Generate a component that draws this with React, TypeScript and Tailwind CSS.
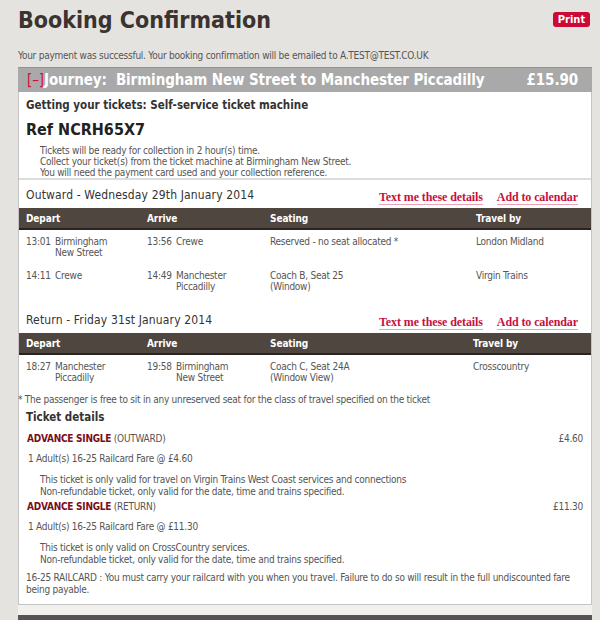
import React from "react";

const Lines = ({ items }: { items: string[] }) => (
  <div>
    {items.map((x) => (
      <div key={x}>{x}</div>
    ))}
  </div>
);

const Row = ({
  d,
  a,
  s,
  t,
  cols,
}: {
  d: [string, string[]];
  a: [string, string[]];
  s: string[];
  t: string;
  cols: string;
}) => (
  <div className={`grid ${cols} pl-[7px] pt-[6px] pb-[6px] text-[10px] tracking-[-0.25px] leading-[11px] text-[#555]`}>
    <div className="flex">
      <span className="w-[29px] shrink-0">{d[0]}</span>
      <Lines items={d[1]} />
    </div>
    <div className="flex">
      <span className="w-[29px] shrink-0">{a[0]}</span>
      <Lines items={a[1]} />
    </div>
    <Lines items={s} />
    <div>{t}</div>
  </div>
);

const TableHead = ({ cols }: { cols: string }) => (
  <div className={`grid ${cols} pl-[7px] h-[22px] items-center bg-[#4f4640] border-b-2 border-[#2a2421] text-white font-bold text-[10px] tracking-[-0.1px]`}>
    <div>Depart</div>
    <div>Arrive</div>
    <div>Seating</div>
    <div>Travel by</div>
  </div>
);

const SectionTitle = ({ title }: { title: string }) => (
  <div className="flex items-start justify-between pl-[7px] pr-[13px] h-[28px] pt-[7px]">
    <span className="text-[12px] tracking-[0.15px] text-[#333] leading-[16px]">{title}</span>
    <div className="flex gap-[14px] mt-[4px] text-[12px] tracking-[-0.1px] font-bold text-[#c9103d] font-['Liberation_Serif',serif] leading-[13px]">
      <span className="border-b border-[#eaa4b6]">Text me these details</span>
      <span className="border-b border-[#eaa4b6]">Add to calendar</span>
    </div>
  </div>
);

const OUT_COLS = "grid-cols-[121px_123px_206px_1fr]";
const RET_COLS = "grid-cols-[121px_123px_203px_1fr]";

export default function App() {
  return (
    <div className="w-[600px] h-[620px] overflow-hidden bg-[#e5e3df] font-['DejaVu_Sans_Condensed','Liberation_Sans',sans-serif] text-[#444]">
      <div className="flex justify-between items-start pl-[18px] pr-[10px] pt-[4px]">
        <h1 className="text-[23px] leading-[32px] font-bold text-[#3a3330]">Booking Confirmation</h1>
        <span className="mt-[8px] w-[37px] text-center h-[15px] leading-[15px] rounded-[3px] bg-[#cc0a35] text-white text-[11px] font-bold">
          Print
        </span>
      </div>
      <div className="pl-[18px] mt-[13px] text-[10px] tracking-[-0.25px] leading-[14px] text-[#555]">
        Your payment was successful. Your booking confirmation will be emailed to A.TEST@TEST.CO.UK
      </div>
      <div className="ml-[18px] mr-[8px] mt-[4px]">
        <div className="h-[25px] bg-[#a9a9a9] flex items-center justify-between pl-[9px] pr-[14px] text-white font-bold text-[15px] tracking-[-0.1px] border-t border-[#939393] whitespace-nowrap">
          <span>
            <span className="text-[#d0103a] font-normal">[–]</span>Journey:&nbsp; Birmingham New Street to Manchester Piccadilly
          </span>
          <span>£15.90</span>
        </div>
        <div className="bg-white border border-[#c4c4c4] border-t-0 pb-[8px]">
          <div className="pl-[7px] pt-[5px] text-[11.5px] font-bold text-[#333] leading-[16px]">
            Getting your tickets: Self-service ticket machine
          </div>
          <div className="pl-[7px] mt-[7px] text-[16px] font-bold text-[#222] leading-[20px]">Ref NCRH65X7</div>
          <div className="pl-[21px] mt-[5px] text-[10px] tracking-[-0.25px] leading-[11px] text-[#555]">
            <div>Tickets will be ready for collection in 2 hour(s) time.</div>
            <div>Collect your ticket(s) from the ticket machine at Birmingham New Street.</div>
            <div>You will need the payment card used and your collection reference.</div>
          </div>
          <div className="border-t-2 border-[#dddddd]" />
          <SectionTitle title="Outward - Wednesday 29th January 2014" />
          <TableHead cols={OUT_COLS} />
          <Row cols={OUT_COLS} d={["13:01", ["Birmingham", "New Street"]]} a={["13:56", ["Crewe"]]} s={["Reserved - no seat allocated *"]} t="London Midland" />
          <Row cols={OUT_COLS} d={["14:11", ["Crewe"]]} a={["14:49", ["Manchester", "Piccadilly"]]} s={["Coach B, Seat 25", "(Window)"]} t="Virgin Trains" />
          <div className="h-[7px]" />
          <SectionTitle title="Return - Friday 31st January 2014" />
          <TableHead cols={RET_COLS} />
          <Row cols={RET_COLS} d={["18:27", ["Manchester", "Piccadilly"]]} a={["19:58", ["Birmingham", "New Street"]]} s={["Coach C, Seat 24A", "(Window View)"]} t="Crosscountry" />
          <div className="-ml-px mt-[5px] text-[10px] tracking-[-0.25px] leading-[12px] text-[#555]">
            * The passenger is free to sit in any unreserved seat for the class of travel specified on the ticket
          </div>
          <div className="pl-[7px] mt-[3px] text-[11.5px] font-bold text-[#333] leading-[16px]">Ticket details</div>
          <div className="pl-[8px] pr-[8px] text-[10px] tracking-[-0.25px] text-[#555]">
            <div className="flex justify-between mt-[7px] leading-[14px]">
              <span>
                <span className="text-[#7a0c1c] font-bold">ADVANCE SINGLE</span> (OUTWARD)
              </span>
              <span>£4.60</span>
            </div>
            <div className="pl-[1px] mt-[6px] leading-[14px]">1 Adult(s) 16-25 Railcard Fare @ £4.60</div>
            <div className="pl-[13px] mt-[8px] leading-[12px]">
              <div>This ticket is only valid for travel on Virgin Trains West Coast services and connections</div>
              <div>Non-refundable ticket, only valid for the date, time and trains specified.</div>
            </div>
            <div className="flex justify-between mt-[2px] leading-[14px]">
              <span>
                <span className="text-[#7a0c1c] font-bold">ADVANCE SINGLE</span> (RETURN)
              </span>
              <span>£11.30</span>
            </div>
            <div className="pl-[1px] mt-[6px] leading-[14px]">1 Adult(s) 16-25 Railcard Fare @ £11.30</div>
            <div className="pl-[13px] mt-[8px] leading-[12px]">
              <div>This ticket is only valid on CrossCountry services.</div>
              <div>Non-refundable ticket, only valid for the date, time and trains specified.</div>
            </div>
            <div className="mt-[6px] leading-[12px] -ml-px">
              <div>16-25 RAILCARD : You must carry your railcard with you when you travel. Failure to do so will result in the full undiscounted fare</div>
              <div>being payable.</div>
            </div>
          </div>
        </div>
        <div className="h-[10px] bg-[#f2f1ee]" />
        <div className="h-[10px] bg-[#555]" />
      </div>
    </div>
  );
}
